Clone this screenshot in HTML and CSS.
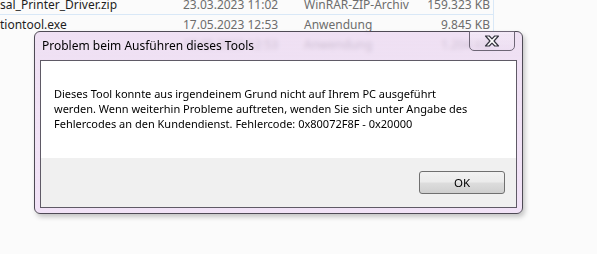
FILE: index.html
```html
<!DOCTYPE html>
<html lang="de">
<head>
    <meta charset="UTF-8">
    <meta name="viewport" content="width=device-width, initial-scale=1.0">
    <title>Problem beim Ausführen dieses Tools</title>
    <link rel="stylesheet" href="styles.css">
</head>
<body>
    <!-- Explorer-Liste im Hintergrund -->
    <div class="dateiliste">
        <div class="zeile aktiv">
            <span class="name">sal_Printer_Driver.zip</span>
            <span class="datum">23.03.2023 11:02</span>
            <span class="typ">WinRAR-ZIP-Archiv</span>
            <span class="groesse">159.323 KB</span>
        </div>
        <div class="zeile">
            <span class="name">tiontool.exe</span>
            <span class="datum">17.05.2023 12:53</span>
            <span class="typ">Anwendung</span>
            <span class="groesse">9.845 KB</span>
        </div>
        <!-- nur hinter dem Glasrahmen sichtbar -->
        <div class="zeile verdeckt">
            <span class="name"></span>
            <span class="datum">17.05.2023 12:53</span>
            <span class="typ">Anwendung</span>
            <span class="groesse">1.204 KB</span>
        </div>
    </div>

    <!-- Fehlerdialog -->
    <div class="dialog">
        <div class="titelleiste">
            <span class="titel">Problem beim Ausführen dieses Tools</span>
            <button class="schliessen" type="button" aria-label="Schließen">
                <svg width="16" height="12" viewBox="0 0 16 12">
                    <path d="M1.5 1 H5.3 L8 3.8 L10.7 1 H14.5 L10 6 L14.5 11 H10.7 L8 8.2 L5.3 11 H1.5 L6 6 Z" fill="#ffffff" stroke="#34343e" stroke-width="1.2" stroke-linejoin="round"/>
                </svg>
            </button>
        </div>
        <div class="inhalt">
            <div class="meldung">
                <p>Dieses Tool konnte aus irgendeinem Grund nicht auf Ihrem PC ausgeführt<br>
                werden. Wenn weiterhin Probleme auftreten, wenden Sie sich unter Angabe des<br>
                Fehlercodes an den Kundendienst. Fehlercode: 0x80072F8F - 0x20000</p>
            </div>
            <div class="knopfleiste">
                <button class="ok" type="button">OK</button>
            </div>
        </div>
    </div>
</body>
</html>
```

FILE: styles.css
```css
/* Grundlayout */
body {
    margin: 0;
    background-color: #fbfbfb;
    font-family: "Noto Sans", "Open Sans", sans-serif;
    font-size: 12px;
    overflow: hidden;
}

/* Explorer-Liste */
.dateiliste {
    margin-top: -5px;
    width: 493px;
    border-right: 1px solid #d9e8f7;
}

.zeile {
    display: grid;
    grid-template-columns: 183px 121px 100px 89px;
    height: 19px;
    line-height: 19px;
    border-bottom: 1px solid transparent;
    color: #6d6d6d;
    white-space: nowrap;
}

.zeile.aktiv {
    border-bottom-color: #d9e8f7;
}

.zeile.verdeckt {
    color: #7a7a80;
}

.zeile .name {
    color: #1e1e1e;
}

.zeile .groesse {
    text-align: right;
    padding-right: 3px;
}

/* Dialogfenster */
.dialog {
    position: absolute;
    left: 34px;
    top: 31px;
    width: 489px;
    box-sizing: border-box;
    padding: 0 5px 5px;
    border: 1px solid #4e4a55;
    border-radius: 6px;
    background: linear-gradient(180deg, rgba(234, 214, 240, 0.72) 0%, rgba(240, 224, 246, 0.92) 100%);
    backdrop-filter: blur(2px);
    box-shadow: 2px 3px 5px rgba(0, 0, 0, 0.22);
}

.titelleiste {
    display: flex;
    justify-content: space-between;
    align-items: flex-start;
    height: 28px;
}

.titel {
    padding-left: 2px;
    line-height: 28px;
    color: #000;
}

.schliessen {
    display: flex;
    align-items: center;
    justify-content: center;
    width: 46px;
    height: 20px;
    margin-top: -1px;
    margin-right: 2px;
    padding: 0;
    border: 1px solid #6e6676;
    border-radius: 0 0 5px 5px;
    background: linear-gradient(180deg, rgba(255, 255, 255, 0.25), rgba(230, 215, 236, 0.35));
}

.inhalt {
    border: 1px solid #5f5a66;
    background-color: #f0f0f0;
}

.meldung {
    height: 97px;
    box-sizing: border-box;
    padding: 25px 0 0 13px;
    background-color: #ffffff;
}

.meldung p {
    margin: 0;
    font-size: 11px;
    line-height: 15px;
    color: #000;
    white-space: nowrap;
}

.knopfleiste {
    display: flex;
    justify-content: flex-end;
    height: 49px;
    box-sizing: border-box;
    padding: 13px 11px 0 0;
}

.ok {
    width: 86px;
    height: 23px;
    padding: 0;
    border: 1px solid #707070;
    border-radius: 3px;
    background: linear-gradient(180deg, #f2f2f2 0%, #ebebeb 48%, #dddddd 52%, #cfcfcf 100%);
    font-family: inherit;
    font-size: 11.5px;
    color: #000;
}
```
